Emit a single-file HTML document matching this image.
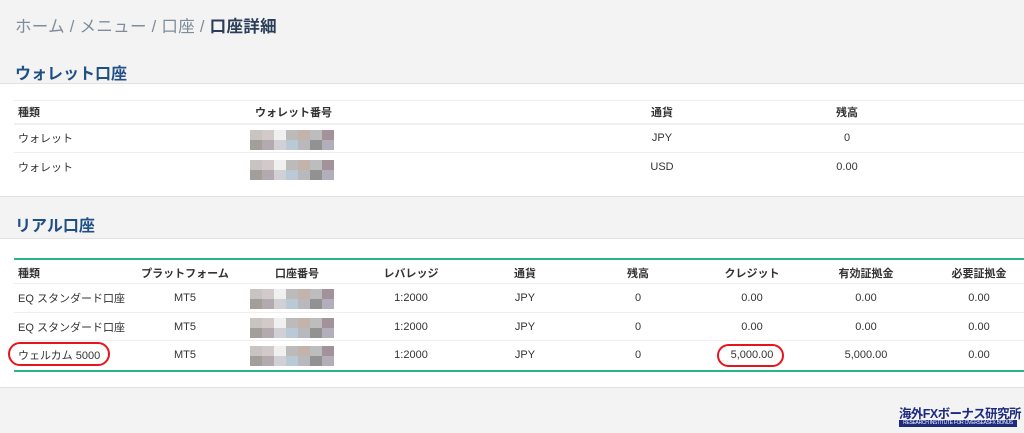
<!DOCTYPE html><html><head><meta charset="utf-8"><style>
body{margin:0;width:1024px;height:433px;background:#f3f3f4;font-family:"Liberation Sans","Noto Sans CJK JP",sans-serif;position:relative;overflow:hidden;color:#333}
.a{position:absolute;white-space:nowrap}
.c{transform:translateX(-50%)}
.bc{font-size:16.5px;color:#7f8c99;left:15px;top:13px;letter-spacing:0.3px}
.bc b{color:#2a3e58}
.t{font-size:16px;color:#1f4f85;font-weight:bold;left:15px}
.p{position:absolute;left:0;right:0;background:#fff;border-top:1px solid #e2e2e2;border-bottom:1px solid #e0e0e0}
.h{font-size:11px;font-weight:bold;color:#333}
.d{font-size:11px;color:#333}
.ln{position:absolute;left:14px;right:0;height:1px;background:#efefef}
.g{position:absolute;left:14px;right:0;height:2px;background:#2bb38a}
.px{position:absolute;width:84px;height:20px;display:grid;grid-template-columns:repeat(7,12px);grid-template-rows:10px 10px}
.px i:nth-child(1){background:#c9c3c1}.px i:nth-child(2){background:#d2cac9}.px i:nth-child(3){background:#f0f0f0}.px i:nth-child(4){background:#bdbbb9}.px i:nth-child(5){background:#c2b3ab}.px i:nth-child(6){background:#bdbdbd}.px i:nth-child(7){background:#a2939a}
.px i:nth-child(8){background:#a29e9a}.px i:nth-child(9){background:#b2aaae}.px i:nth-child(10){background:#d1d1d5}.px i:nth-child(11){background:#b9c9d5}.px i:nth-child(12){background:#b9b9bd}.px i:nth-child(13){background:#929292}.px i:nth-child(14){background:#b2aeba}
.ov{position:absolute;border:2.5px solid #e8141c;border-radius:12px}
</style></head><body>
<div class="a bc">ホーム / メニュー / 口座 / <b>口座詳細</b></div>
<div class="a t" style="top:60px">ウォレット口座</div>
<div class="p" style="top:83px;height:112px"></div>
<div class="ln" style="top:100px"></div>
<div class="ln" style="top:123px;height:2px"></div>
<div class="ln" style="top:152px"></div>
<div class="a h" style="left:18px;top:104px">種類</div>
<div class="a h" style="left:255px;top:104px">ウォレット番号</div>
<div class="a h c" style="left:662px;top:104px">通貨</div>
<div class="a h c" style="left:847px;top:104px">残高</div>
<div class="a d" style="left:18px;top:130px">ウォレット</div>
<div class="a d c" style="left:662px;top:132px">JPY</div>
<div class="a d c" style="left:847px;top:132px">0</div>
<div class="a d" style="left:18px;top:159px">ウォレット</div>
<div class="a d c" style="left:662px;top:161px">USD</div>
<div class="a d c" style="left:847px;top:161px">0.00</div>
<div class="px" style="left:250px;top:130px"><i></i><i></i><i></i><i></i><i></i><i></i><i></i><i></i><i></i><i></i><i></i><i></i><i></i><i></i></div>
<div class="px" style="left:250px;top:160px"><i></i><i></i><i></i><i></i><i></i><i></i><i></i><i></i><i></i><i></i><i></i><i></i><i></i><i></i></div>

<div class="a t" style="top:212px">リアル口座</div>
<div class="p" style="top:238px;height:148px"></div>
<div class="g" style="top:258px"></div>
<div class="ln" style="top:283px"></div>
<div class="ln" style="top:312px"></div>
<div class="ln" style="top:340px"></div>
<div class="g" style="top:370px"></div>
<div class="a h" style="left:18px;top:265px">種類</div>
<div class="a h c" style="left:185px;top:265px">プラットフォーム</div>
<div class="a h c" style="left:297px;top:265px">口座番号</div>
<div class="a h c" style="left:411px;top:265px">レバレッジ</div>
<div class="a h c" style="left:525px;top:265px">通貨</div>
<div class="a h c" style="left:638px;top:265px">残高</div>
<div class="a h c" style="left:752px;top:265px">クレジット</div>
<div class="a h c" style="left:866px;top:265px">有効証拠金</div>
<div class="a h c" style="left:979px;top:265px">必要証拠金</div>

<div class="a d" style="left:18px;top:290px">EQ スタンダード口座</div>
<div class="a d" style="left:18px;top:319px">EQ スタンダード口座</div>
<div class="a d" style="left:18px;top:347px">ウェルカム 5000</div>

<div class="a d c" style="left:185px;top:292px">MT5</div><div class="a d c" style="left:185px;top:321px">MT5</div><div class="a d c" style="left:185px;top:349px">MT5</div>
<div class="a d c" style="left:411px;top:292px">1:2000</div><div class="a d c" style="left:411px;top:321px">1:2000</div><div class="a d c" style="left:411px;top:349px">1:2000</div>
<div class="a d c" style="left:525px;top:292px">JPY</div><div class="a d c" style="left:525px;top:321px">JPY</div><div class="a d c" style="left:525px;top:349px">JPY</div>
<div class="a d c" style="left:638px;top:292px">0</div><div class="a d c" style="left:638px;top:321px">0</div><div class="a d c" style="left:638px;top:349px">0</div>
<div class="a d c" style="left:752px;top:292px">0.00</div><div class="a d c" style="left:752px;top:321px">0.00</div><div class="a d c" style="left:752px;top:349px">5,000.00</div>
<div class="a d c" style="left:866px;top:292px">0.00</div><div class="a d c" style="left:866px;top:321px">0.00</div><div class="a d c" style="left:866px;top:349px">5,000.00</div>
<div class="a d c" style="left:979px;top:292px">0.00</div><div class="a d c" style="left:979px;top:321px">0.00</div><div class="a d c" style="left:979px;top:349px">0.00</div>
<div class="px" style="left:250px;top:289px"><i></i><i></i><i></i><i></i><i></i><i></i><i></i><i></i><i></i><i></i><i></i><i></i><i></i><i></i></div>
<div class="px" style="left:250px;top:318px"><i></i><i></i><i></i><i></i><i></i><i></i><i></i><i></i><i></i><i></i><i></i><i></i><i></i><i></i></div>
<div class="px" style="left:250px;top:346px"><i></i><i></i><i></i><i></i><i></i><i></i><i></i><i></i><i></i><i></i><i></i><i></i><i></i><i></i></div>
<div class="ov" style="left:8px;top:342px;width:98px;height:20px"></div>
<div class="ov" style="left:717px;top:344px;width:63px;height:19px"></div>

<div class="a" style="left:899px;top:403px;font-size:12.5px;font-weight:bold;color:#1c2a80;letter-spacing:-0.6px">海外FXボーナス研究所</div>
<div class="a" style="left:899px;top:420px;width:118px;height:7px;background:#1c2a80;color:#fff;font-size:5px;line-height:7px;overflow:hidden;text-align:center;letter-spacing:-0.3px">RESEARCH INSTITUTE FOR OVERSEASFX BONUS</div>
</body></html>
